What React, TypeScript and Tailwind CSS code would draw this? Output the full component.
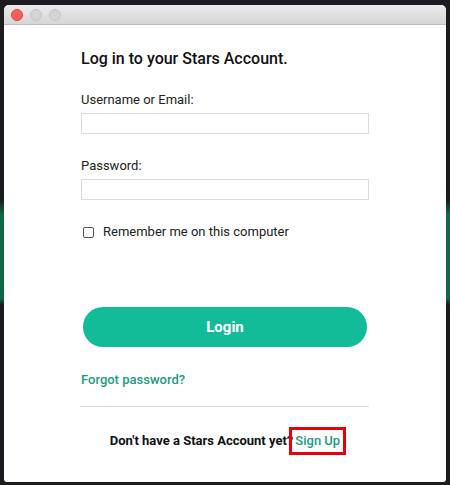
import React from 'react'

export default function App() {
  return (
    <div className="w-[450px] h-[485px] overflow-hidden bg-[linear-gradient(180deg,#1c1c20_0px,#1c1c20_200px,#0d6a45_215px,#0d6a45_298px,#1c1c20_305px,#1c1c20_485px)] pt-[5px] px-[4px] font-['Roboto',sans-serif]">
      <div className="flex flex-col h-[477px] bg-white rounded-t-[5px] rounded-b-[3px] overflow-hidden">
        {/* title bar */}
        <div className="flex items-center gap-[7px] h-[20px] px-[7px] bg-[linear-gradient(180deg,#ebebeb,#d6d6d6)] border-b border-[#bdbdbd]">
          <span className="w-[12px] h-[12px] rounded-full bg-[#fc5f57] border border-[#e0443e]" />
          <span className="w-[12px] h-[12px] rounded-full bg-[#d4d4d4] border border-[#c4c4c4]" />
          <span className="w-[12px] h-[12px] rounded-full bg-[#d4d4d4] border border-[#c4c4c4]" />
        </div>

        <div className="flex flex-col pl-[77px] pr-[77px]">
          <h1 className="mt-[23px] text-[16px] leading-[22px] font-medium text-[#111]">Log in to your Stars Account.</h1>

          <label className="mt-[22px] text-[13px] leading-[16px] text-[#222]">Username or Email:</label>
          <input className="mt-[5px] w-[288px] h-[21px] border border-[#dcdcdc] outline-none" />

          <label className="mt-[24px] text-[13px] leading-[16px] text-[#222]">Password:</label>
          <input type="password" className="mt-[5px] w-[288px] h-[21px] border border-[#dcdcdc] outline-none" />

          <div className="flex items-center gap-[9px] mt-[24px] pl-[2px]">
            <span className="w-[11px] h-[11px] border border-[#555] rounded-[2px]" />
            <span className="text-[13px] leading-[16px] text-[#222]">Remember me on this computer</span>
          </div>

          <button className="mt-[67px] ml-[2px] w-[284px] h-[40px] rounded-full bg-[#13bc98] text-white text-[15px] font-bold">
            Login
          </button>

          <a className="mt-[25px] text-[13px] leading-[16px] font-medium text-[#1b9c80]">Forgot password?</a>

          <div className="mt-[18px] -ml-[1px] w-[289px] h-px bg-[#dadada]" />

          <div className="flex items-center justify-center mt-[20px] w-[290px] pl-[4px]">
            <span className="text-[13px] leading-[16px] font-bold text-[#111]">Don't have a Stars Account yet?</span>
            <span className="-ml-[4px] border-[3px] border-[#e8000f] px-[3px] py-[3px] text-[13px] leading-[16px] font-medium text-[#1b9c80]">
              Sign Up
            </span>
          </div>
        </div>
      </div>
    </div>
  )
}
